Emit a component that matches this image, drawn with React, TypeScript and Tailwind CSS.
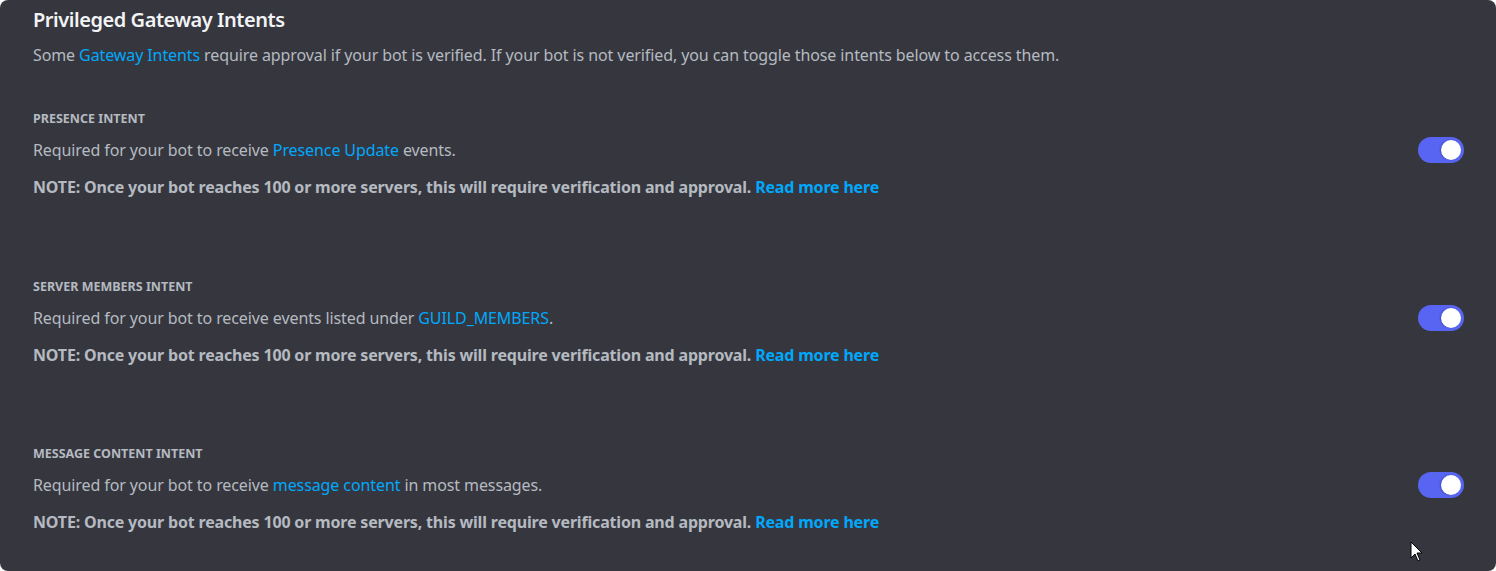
const LINK = "text-[#00a8fc]";

type Intent = {
  id: string;
  label: string;
  description: React.ReactNode;
};

const INTENTS: Intent[] = [
  {
    id: "presence",
    label: "PRESENCE INTENT",
    description: (
      <>
        Required for your bot to receive <span className={LINK}>Presence Update</span> events.
      </>
    ),
  },
  {
    id: "members",
    label: "SERVER MEMBERS INTENT",
    description: (
      <>
        Required for your bot to receive events listed under{" "}
        <span className={LINK}>GUILD_MEMBERS</span>.
      </>
    ),
  },
  {
    id: "content",
    label: "MESSAGE CONTENT INTENT",
    description: (
      <>
        Required for your bot to receive <span className={LINK}>message content</span> in most
        messages.
      </>
    ),
  },
];

function Toggle() {
  return (
    <div className="flex h-[26px] w-[46px] shrink-0 items-center justify-end rounded-full bg-[#5865f2] pr-[3px]">
      <div className="h-[20px] w-[20px] rounded-full bg-white shadow-[-1px_0_2px_rgba(0,0,0,0.25)]" />
    </div>
  );
}

function IntentRow({ intent }: { intent: Intent }) {
  return (
    <div className="flex flex-col">
      <div className="h-4 text-[12.5px] font-bold leading-4 text-[#b5bac1]">{intent.label}</div>
      <div className="mt-[10px] flex items-center justify-between">
        <div className="h-6 text-[16px] leading-6 tracking-[-0.1px] text-[#b5bac1]">
          {intent.description}
        </div>
        <Toggle />
      </div>
      <div className="mt-[12px] h-6 text-[16px] font-bold leading-6 tracking-[-0.18px] text-[#b5bac1]">
        NOTE: Once your bot reaches 100 or more servers, this will require verification and
        approval. <span className={LINK}>Read more here</span>
      </div>
    </div>
  );
}

export default function App() {
  return (
    <div className="h-[571px] w-full bg-white">
      <div
        className="relative flex h-[571px] flex-col rounded-lg bg-[#36373e] pl-[33px] pr-[32px] pt-2"
        style={{ fontFamily: '"Noto Sans", "Open Sans", sans-serif' }}
      >
        <h2 className="h-6 text-[20px] font-semibold leading-6 tracking-[-0.45px] text-[#f2f3f5]">
          Privileged Gateway Intents
        </h2>
        <p className="mt-[11px] h-6 text-[16px] leading-6 tracking-[-0.1px] text-[#b5bac1]">
          Some <span className={LINK}>Gateway Intents</span> require approval if your bot is
          verified. If your bot is not verified, you can toggle those intents below to access them.
        </p>
        <div className="mt-[44px] flex flex-col gap-[79.5px]">
          {INTENTS.map((intent) => (
            <IntentRow key={intent.id} intent={intent} />
          ))}
        </div>

        {/* mouse cursor */}
        <svg
          className="absolute left-[1410px] top-[541px]"
          width="14"
          height="22"
          viewBox="0 0 14 22"
        >
          <path
            d="M1 1 L1 17 L5 13 L8 20 L10 19 L7 12 L12 12 Z"
            fill="white"
            stroke="black"
            strokeWidth="1"
            strokeLinejoin="round"
          />
        </svg>
      </div>
    </div>
  );
}
